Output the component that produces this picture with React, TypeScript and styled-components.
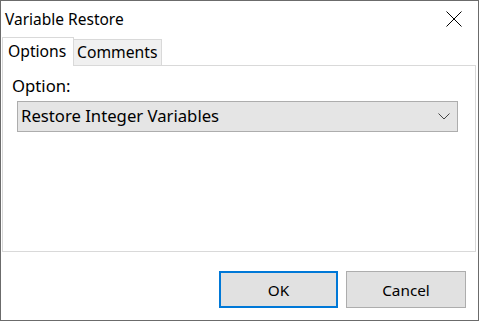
import React from 'react';
import styled, { createGlobalStyle } from 'styled-components';

const GlobalStyle = createGlobalStyle`
  * {
    box-sizing: border-box;
  }

  html,
  body {
    margin: 0;
    padding: 0;
    background: #ffffff;
  }

  body {
    font-family: 'Noto Sans', 'Liberation Sans', sans-serif;
    font-size: 15px;
    color: #000000;
  }
`;

export default function App(): React.ReactElement {
  return (
    <>
      <GlobalStyle />
      <Window>
        <TitleBar>
          <Title>Variable Restore</Title>
          <CloseButton aria-label='Close'>
            <svg width='16' height='16' viewBox='0 0 16 16'>
              <path d='M0.5 0.5 L15.5 15.5 M15.5 0.5 L0.5 15.5' stroke='#000' strokeWidth='1' fill='none' />
            </svg>
          </CloseButton>
        </TitleBar>

        <TabStrip>
          <Tab selected>Options</Tab>
          <Tab>Comments</Tab>
        </TabStrip>

        <Panel>
          <Label>Option:</Label>
          <Select>
            <span>Restore Integer Variables</span>
            <svg width='12' height='7' viewBox='0 0 12 7'>
              <path d='M0.5 0.5 L6 6 L11.5 0.5' stroke='#444' strokeWidth='1' fill='none' />
            </svg>
          </Select>
        </Panel>

        <Footer>
          <Button primary>OK</Button>
          <Button>Cancel</Button>
        </Footer>
      </Window>
    </>
  );
}

const Window = styled.div`
  width: 479px;
  height: 321px;

  display: flex;
  flex-direction: column;

  border: 1px solid #6b6b6b;
  background: #ffffff;
`;

const TitleBar = styled.div`
  height: 36px;
  flex-shrink: 0;

  display: flex;
  align-items: flex-start;
  justify-content: space-between;

  padding-left: 4px;
`;

const Title = styled.span`
  margin-top: 8px;
  font-size: 15.5px;
  line-height: 20px;
`;

const CloseButton = styled.div`
  width: 16px;
  height: 16px;

  margin-top: 10px;
  margin-right: 16px;

  svg {
    display: block;
  }
`;

const TabStrip = styled.div`
  height: 28px;
  flex-shrink: 0;

  display: flex;
  align-items: flex-end;

  padding-left: 1px;
`;

const Tab = styled.div<{ selected?: boolean }>`
  position: relative;

  width: ${({ selected }): string => (selected ? '72px' : '88px')};
  height: ${({ selected }): string => (selected ? '29px' : '26px')};
  margin-bottom: ${({ selected }): string => (selected ? '-1px' : '0')};
  padding: ${({ selected }): string => (selected ? '3px 0 0 5px' : '2px 0 0 3px')};

  border: 1px solid #d9d9d9;
  border-bottom: none;
  border-left: ${({ selected }): string => (selected ? '1px solid #d9d9d9' : 'none')};

  background: ${({ selected }): string => (selected ? '#ffffff' : '#f0f0f0')};
  z-index: ${({ selected }): number => (selected ? 1 : 0)};

  font-size: 15.7px;
  line-height: 20px;
  white-space: nowrap;
`;

const Panel = styled.div`
  height: 187px;
  flex-shrink: 0;

  display: flex;
  flex-direction: column;

  margin: 0 2px 0 1px;
  padding: 10px 17px 0 9px;

  border: 1px solid #d9d9d9;
  font-size: 16.7px;
`;

const Label = styled.div`
  line-height: 20px;
`;

const Select = styled.div`
  height: 31px;

  display: flex;
  align-items: center;
  justify-content: space-between;

  margin-top: 5px;
  margin-left: 5px;
  padding: 0 7px 0 3px;

  background: #e5e5e5;
  border: 1px solid #adadad;

  span {
    margin-bottom: 3px;
  }

  svg {
    display: block;
  }
`;

const Footer = styled.div`
  flex: 1;

  display: flex;
  justify-content: flex-end;
  align-items: flex-start;
  gap: 8px;

  padding: 19px 12px 0 0;
`;

const Button = styled.div<{ primary?: boolean }>`
  width: ${({ primary }): string => (primary ? '119px' : '120px')};
  height: 37px;

  display: flex;
  align-items: center;
  justify-content: center;

  background: #e1e1e1;
  border: ${({ primary }): string => (primary ? '2px solid #0078d7' : '1px solid #adadad')};
  font-size: 15.3px;
`;
